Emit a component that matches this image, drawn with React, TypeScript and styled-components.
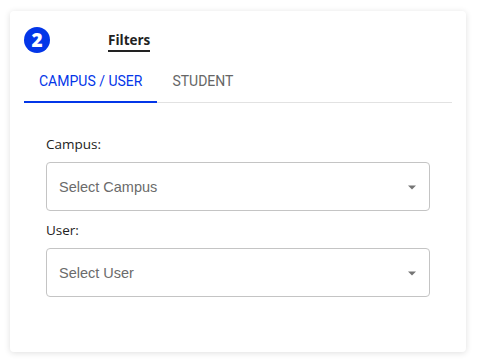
import React, { useState } from "react";
import styled, { createGlobalStyle } from "styled-components";

const GlobalStyle = createGlobalStyle`
  html, body { margin: 0; padding: 0; background: #ffffff; }
  * { box-sizing: border-box; }
`;

const Page = styled.div`
  padding: 11px 11px 11px 10px;
`;

const Card = styled.div`
  width: 456px;
  height: 341px;
  background: #fff;
  border-radius: 4px;
  box-shadow: 0 1px 6px rgba(0, 0, 0, 0.13);
  padding: 16px 14px 0 14px;
  display: flex;
  flex-direction: column;
`;

const Header = styled.div`
  display: flex;
  align-items: center;
  height: 26px;
`;

const Badge = styled.div`
  width: 26px;
  height: 26px;
  border-radius: 50%;
  background: #0336e8;
  color: #fff;
  font-family: "Open Sans", Arial, sans-serif;
  font-weight: 800;
  font-size: 19px;
  display: flex;
  align-items: center;
  justify-content: center;
  line-height: 1;
`;

const Title = styled.div`
  margin-left: 58px;
  font-family: "Open Sans", Arial, sans-serif;
  font-weight: 700;
  font-size: 13.5px;
  color: #222;
  line-height: 17px;
  padding-bottom: 1px;
  border-bottom: 2px solid #222;
  margin-top: 4px;
`;

const TabList = styled.div`
  display: flex;
  margin-top: 2px;
  border-bottom: 1px solid #e2e2e2;
`;

const Tab = styled.button<{ $active?: boolean }>`
  background: none;
  border: none;
  margin: 0 0 -1px 0;
  padding: 5px 15px 0;
  height: 48px;
  font-family: Roboto, Arial, sans-serif;
  font-size: 14px;
  font-weight: 400;
  letter-spacing: 0;
  text-transform: uppercase;
  color: ${(p) => (p.$active ? "#0336e8" : "#666666")};
  border-bottom: 2px solid ${(p) => (p.$active ? "#0336e8" : "transparent")};
  cursor: pointer;
`;

const Body = styled.div`
  padding: 0 22px;
  display: flex;
  flex-direction: column;
`;

const Label = styled.label<{ $first?: boolean }>`
  font-family: "Open Sans", Arial, sans-serif;
  font-size: 13.5px;
  color: #222;
  line-height: 18px;
  margin-top: ${(p) => (p.$first ? "32px" : "10px")};
  margin-bottom: 9px;
`;

const SelectBox = styled.div`
  height: 49px;
  border: 1px solid #c4c4c4;
  border-radius: 4px;
  display: flex;
  align-items: center;
  justify-content: space-between;
  padding: 0 5px 0 12px;
  font-family: Arial, "Liberation Sans", sans-serif;
  font-size: 14.5px;
  color: #6b6b6b;
`;

const Arrow = () => (
  <svg width="24" height="24" viewBox="0 0 24 24" style={{ marginTop: 1 }}>
    <path d="M8 10.5l4 4 4-4z" fill="#757575" />
  </svg>
);

export default function App() {
  const [tab, setTab] = useState(0);
  return (
    <Page>
      <GlobalStyle />
      <Card>
        <Header>
          <Badge>2</Badge>
          <Title>Filters</Title>
        </Header>
        <TabList>
          <Tab $active={tab === 0} onClick={() => setTab(0)}>
            Campus / User
          </Tab>
          <Tab $active={tab === 1} onClick={() => setTab(1)}>
            Student
          </Tab>
        </TabList>
        <Body>
          <Label $first>Campus:</Label>
          <SelectBox>
            <span>Select Campus</span>
            <Arrow />
          </SelectBox>
          <Label>User:</Label>
          <SelectBox>
            <span>Select User</span>
            <Arrow />
          </SelectBox>
        </Body>
      </Card>
    </Page>
  );
}
